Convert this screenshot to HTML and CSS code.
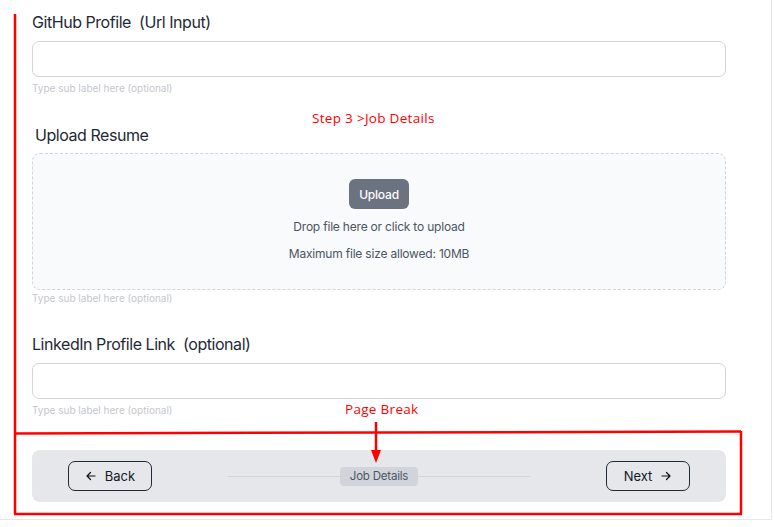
FILE: index.html
```html
<!DOCTYPE html>
<html lang="en">
<head>
  <meta charset="UTF-8">
  <meta name="viewport" content="width=device-width, initial-scale=1.0">
  <title>Job Application - Step 3</title>
  <link rel="stylesheet" href="styles.css">
</head>
<body>
  <div class="page">
    <form class="form">
      <div class="field">
        <label class="field-label" for="github">GitHub Profile &nbsp;(Url Input)</label>
        <input class="field-input" id="github" type="url">
        <p class="sub-label">Type sub label here (optional)</p>
      </div>

      <div class="field upload-field">
        <label class="field-label upload-label">Upload Resume</label>
        <div class="dropzone">
          <button type="button" class="upload-btn">Upload</button>
          <p class="drop-text">Drop file here or click to upload</p>
          <p class="drop-text">Maximum file size allowed: 10MB</p>
        </div>
        <p class="sub-label">Type sub label here (optional)</p>
      </div>

      <div class="field">
        <label class="field-label" for="linkedin">LinkedIn Profile Link &nbsp;(optional)</label>
        <input class="field-input" id="linkedin" type="url">
        <p class="sub-label">Type sub label here (optional)</p>
      </div>

      <div class="wizard-nav">
        <button type="button" class="nav-btn">
          <svg width="12" height="12" viewBox="0 0 12 12"><path d="M10 6H2M5.5 2.5L2 6l3.5 3.5" fill="none" stroke="#111" stroke-width="1.2" stroke-linecap="round" stroke-linejoin="round"/></svg>
          Back
        </button>
        <div class="steps">
          <span class="step-line"></span>
          <span class="step-pill">Job Details</span>
          <span class="step-line"></span>
        </div>
        <button type="button" class="nav-btn">
          Next
          <svg width="12" height="12" viewBox="0 0 12 12"><path d="M2 6h8M6.5 2.5L10 6l-3.5 3.5" fill="none" stroke="#111" stroke-width="1.2" stroke-linecap="round" stroke-linejoin="round"/></svg>
        </button>
      </div>
    </form>

    <!-- review annotations drawn on top of the page -->
    <div class="notes">
      <svg class="notes-lines" width="774" height="527" viewBox="0 0 774 527">
        <g stroke="#ff0000" stroke-width="2.5" fill="none">
          <path d="M15 14V514"/>
          <path d="M14 433.5L741 431.5"/>
          <path d="M741 431V514"/>
          <path d="M14 514H742"/>
          <path d="M376 422V452"/>
        </g>
        <path d="M371 450H381L376 463Z" fill="#ff0000"/>
      </svg>
      <span class="note step-note">Step 3 &gt;Job Details</span>
      <span class="note break-note">Page Break</span>
    </div>
  </div>
</body>
</html>
```

FILE: styles.css
```css
body {
  margin: 0;
  padding: 0;
  background: white;
  font-family: Inter, "Noto Sans", sans-serif;
  color: #111827;
}
.page {
  position: relative;
  width: 771px;
  height: 519px;
  border-right: 1px solid #e5e7eb;
  border-bottom: 1px solid #e5e7eb;
  overflow: hidden;
}
.form {
  width: 694px;
  padding: 11px 0 0 32px;
}
.field {
  margin-bottom: 29px;
}
.upload-field {
  margin-bottom: 28px;
}
.field-label {
  display: block;
  font-size: 16px;
  line-height: 22px;
  letter-spacing: -0.45px;
  color: #1f2937;
  margin-bottom: 8px;
}
.upload-label {
  padding-left: 3px;
  margin-bottom: 7px;
}
.field-input {
  display: block;
  box-sizing: border-box;
  width: 100%;
  height: 36px;
  border: 1px solid #d1d5db;
  border-radius: 7px;
  background: white;
  margin: 0;
}
.sub-label {
  margin: 4px 0 0;
  font-size: 10px;
  line-height: 14px;
  letter-spacing: 0;
  color: #c4c7cd;
}
.dropzone {
  box-sizing: border-box;
  height: 137px;
  border: 1px dashed #d1d5db;
  border-radius: 8px;
  background: #f9fafb;
  display: flex;
  flex-direction: column;
  align-items: center;
  padding-top: 25px;
}
.dropzone + .sub-label {
  margin-top: 1px;
}
.upload-btn {
  width: 60px;
  height: 30px;
  border: none;
  border-radius: 6px;
  background: #6b7280;
  color: white;
  font-family: inherit;
  font-size: 12px;
  font-weight: 500;
  letter-spacing: -0.2px;
  margin-bottom: 10px;
}
.drop-text {
  margin: 0 0 11px;
  font-size: 12px;
  line-height: 16px;
  letter-spacing: -0.2px;
  color: #4b5563;
}
.wizard-nav {
  margin-top: 33px;
  height: 52px;
  border-radius: 8px;
  background: #e5e7eb;
  display: flex;
  align-items: center;
  justify-content: space-between;
  padding: 0 36px;
}
.nav-btn {
  box-sizing: border-box;
  width: 84px;
  height: 30px;
  border: 1px solid #1f2937;
  border-radius: 7px;
  background: transparent;
  display: flex;
  align-items: center;
  justify-content: center;
  gap: 8px;
  font-family: inherit;
  font-size: 13px;
  color: #111827;
}
.steps {
  width: 302px;
  display: flex;
  align-items: center;
}
.step-line {
  flex: 1;
  height: 1px;
  background: #d1d5db;
}
.step-pill {
  width: 78px;
  height: 19px;
  line-height: 19px;
  text-align: center;
  border-radius: 4px;
  background: #d1d5db;
  font-size: 11.5px;
  letter-spacing: -0.2px;
  color: #4b5563;
}
.notes {
  position: absolute;
  left: 0;
  top: 0;
  width: 774px;
  height: 527px;
  pointer-events: none;
}
.notes-lines {
  position: absolute;
  left: 0;
  top: 0;
}
.note {
  position: absolute;
  font-family: "Open Sans", sans-serif;
  font-size: 13.5px;
  line-height: 16px;
  color: #ff0000;
  letter-spacing: 0.3px;
}
.step-note {
  left: 312px;
  top: 110px;
}
.break-note {
  left: 345px;
  top: 401px;
}
```
